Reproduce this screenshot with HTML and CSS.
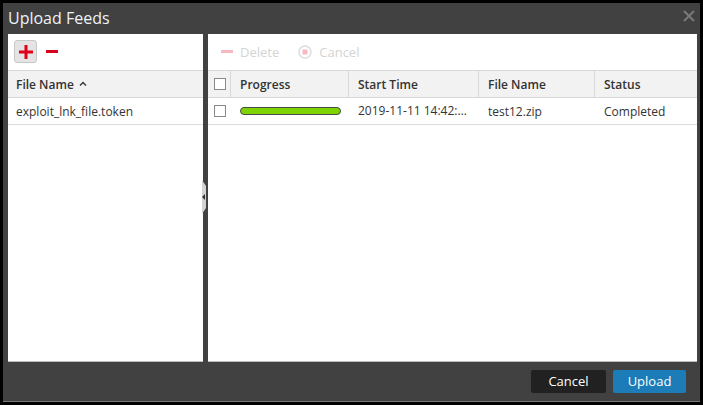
FILE: index.html
```html
<!DOCTYPE html>
<html>
<head>
<meta charset="utf-8">
<link rel="stylesheet" href="styles.css">
</head>
<body>
<div class="dialog">
  <div class="titlebar">
    <span class="title">Upload Feeds</span>
    <svg class="close" width="12" height="12" viewBox="0 0 12 12"><path d="M1 1L11 11M11 1L1 11" stroke="#7a7a7a" stroke-width="2"/></svg>
  </div>
  <div class="content">
    <div class="panel left">
      <div class="toolbar">
        <span class="btn-add"><svg width="14" height="14" viewBox="0 0 14 14"><path d="M7 0V14M0 7H14" stroke="#e1001a" stroke-width="3"/></svg></span>
        <span class="btn-remove"><svg width="12" height="3" viewBox="0 0 12 3"><rect width="12" height="3" fill="#d9001b"/></svg></span>
      </div>
      <div class="hdr-row">
        <span class="hdr-cell">File Name <svg class="sort" width="8" height="5" viewBox="0 0 8 5"><path d="M1 4.5L4 1.5L7 4.5" stroke="#333" stroke-width="1.4" fill="none"/></svg></span>
      </div>
      <div class="row">
        <span class="cell">exploit_lnk_file.token</span>
      </div>
    </div>
    <div class="splitter">
      <div class="handle"><span class="arrow"></span></div>
    </div>
    <div class="panel right">
      <div class="toolbar">
        <span class="tool disabled"><svg width="12" height="3" viewBox="0 0 12 3"><rect width="12" height="3" fill="#f7b9bf"/></svg>Delete</span>
        <span class="tool disabled"><svg width="14" height="14" viewBox="0 0 14 14"><circle cx="7" cy="7" r="6" fill="#fff" stroke="#dcdcdc" stroke-width="1.5"/><rect x="4.5" y="4.5" width="5" height="5" fill="#f7b9bf"/></svg>Cancel</span>
      </div>
      <div class="grid">
        <div class="grow head">
          <span class="gc chk"><span class="box"></span></span>
          <span class="gc c1">Progress</span>
          <span class="gc c2">Start Time</span>
          <span class="gc c3">File Name</span>
          <span class="gc c4">Status</span>
        </div>
        <div class="grow body">
          <span class="gc chk"><span class="box"></span></span>
          <span class="gc c1"><span class="bar"></span></span>
          <span class="gc c2 ell">2019-11-11 14:42:35</span>
          <span class="gc c3">test12.zip</span>
          <span class="gc c4">Completed</span>
        </div>
      </div>
    </div>
  </div>
  <div class="footer">
    <button class="btn cancel">Cancel</button>
    <button class="btn upload">Upload</button>
  </div>
</div>
</body>
</html>
```

FILE: styles.css
```css
* { box-sizing: border-box; }
html, body { margin: 0; padding: 0; }
body {
  background: #000;
  width: 703px;
  height: 405px;
  padding: 3px;
  font-family: "Open Sans", "Noto Sans", sans-serif;
}
.dialog {
  width: 697px;
  height: 399px;
  background: #414141;
  border-bottom: 1px solid #7a7a7a;
  display: flex;
  flex-direction: column;
}
.titlebar {
  height: 31px;
  display: flex;
  align-items: center;
  justify-content: space-between;
  padding: 0 5px 1px 5px;
}
.title {
  color: #eef2f8;
  font-size: 16px;
  line-height: 20px;
}
.close { margin-top: -4px; }
.content {
  height: 328px;
  display: flex;
  padding: 0 3px 0 5px;
}
.panel {
  background: #fff;
  height: 328px;
  border-bottom: 1px solid #bcbcbc;
}
.left { width: 195px; }
.right { flex: 1; }
.splitter {
  width: 5px;
  position: relative;
}
.handle {
  position: absolute;
  left: -1px;
  top: 146px;
  width: 4px;
  height: 34px;
  background: #d4d4d4;
  clip-path: polygon(0 0, 100% 6px, 100% calc(100% - 6px), 0 100%);
}
.arrow {
  position: absolute;
  left: 0;
  top: 14px;
  width: 0;
  height: 0;
  border-top: 3px solid transparent;
  border-bottom: 3px solid transparent;
  border-right: 3px solid #333;
}
.toolbar {
  height: 37px;
  display: flex;
  align-items: center;
  border-bottom: 1px solid #d8d8d8;
  padding-bottom: 1px;
}
.left .toolbar { padding-left: 6px; }
.btn-add {
  width: 23px;
  height: 23px;
  background: #e4e4e4;
  border: 1px solid #c8c8c8;
  border-radius: 3px;
  display: flex;
  align-items: center;
  justify-content: center;
}
.btn-remove {
  display: flex;
  margin-left: 9px;
}
.hdr-row {
  height: 27px;
  background: #f2f2f2;
  border-bottom: 1px solid #d8d8d8;
  display: flex;
  align-items: center;
  padding-left: 8px;
}
.hdr-cell {
  font-size: 12px;
  font-weight: 600;
  color: #333;
  display: flex;
  align-items: center;
}
.sort { margin-left: 5px; margin-top: -2px; }
.row {
  height: 27px;
  border-bottom: 1px solid #dcdcdc;
  display: flex;
  align-items: center;
  padding-left: 8px;
}
.cell { font-size: 12px; color: #333; }
.right .toolbar { padding-left: 13px; }
.tool {
  display: flex;
  align-items: center;
  font-size: 13px;
  color: #d4d4d4;
  margin-right: 19px;
}
.tool svg { margin-right: 7px; }
.grid {
  font-size: 12px;
  color: #333;
}
.grow {
  display: flex;
  height: 27px;
  border-bottom: 1px solid #dcdcdc;
}
.grow.head {
  background: #f2f2f2;
  border-bottom-color: #d8d8d8;
  font-weight: 600;
}
.gc {
  display: flex;
  align-items: center;
  padding: 0 8px 0 9px;
  white-space: nowrap;
  overflow: hidden;
}
.head .gc { border-right: 1px solid #d8d8d8; }
.head .gc.c4 { border-right: none; }
.chk { width: 23px; padding: 0 0 0 6px; }
.c1 { width: 118px; }
.c2 { width: 130px; }
.c3 { width: 116px; }
.c4 { flex: 1; }
.ell { display: block; line-height: 26px; text-overflow: ellipsis; }
.box {
  display: block;
  width: 12px;
  height: 12px;
  border: 1px solid #8a8a8a;
  background: #fff;
}
.bar {
  display: block;
  width: 101px;
  height: 8px;
  background: #7ed400;
  border: 1px solid #4a4a4a;
  border-radius: 4px;
}
.footer {
  flex: 1;
  display: flex;
  justify-content: flex-end;
  align-items: center;
  padding-right: 14px;
  padding-bottom: 1px;
}
.btn {
  height: 23px;
  border: none;
  border-radius: 2px;
  color: #fff;
  font-family: "Open Sans", "Noto Sans", sans-serif;
  font-size: 13px;
  padding: 0;
}
.cancel { width: 75px; background: #212121; margin-right: 7px; }
.upload { width: 73px; background: #1b7cb8; }
```
